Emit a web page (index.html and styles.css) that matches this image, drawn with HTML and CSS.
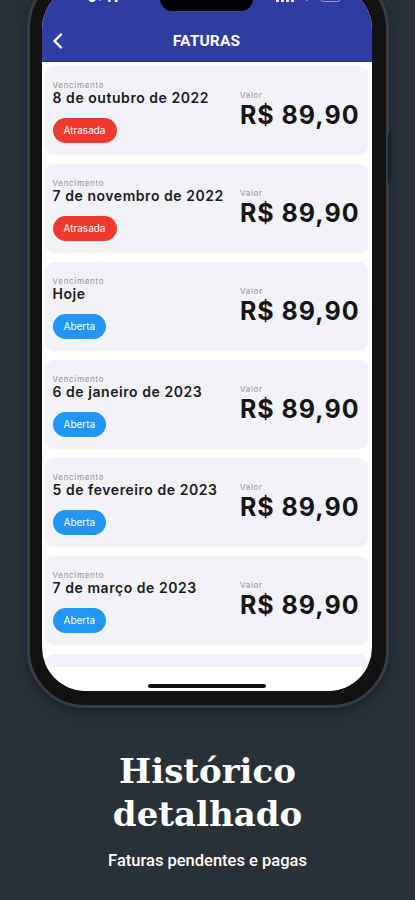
FILE: index.html
```html
<!DOCTYPE html>
<html>
	<head>
		<meta charset="UTF-8">
		<title>Faturas</title>
		<link rel="stylesheet" href="styles.css">
	</head>
	<body>
		<div class="page">
			<div class="phone">
				<span class="side_btn"></span>
				<div class="screen">
					<span class="notch"></span>
					<div class="header">
						<div class="status">
							<span class="time">9:41</span>
							<span class="icons">
								<svg width="18" height="12" viewBox="0 0 18 12"><rect x="0" y="8" width="3" height="4" fill="#fff"/><rect x="5" y="5" width="3" height="7" fill="#fff"/><rect x="10" y="2" width="3" height="10" fill="#fff"/><rect x="15" y="0" width="3" height="12" fill="#fff"/></svg>
								<svg width="14" height="12" viewBox="0 0 14 12"><path d="M7 11 L1 4 Q7 -1 13 4 Z" fill="#fff"/></svg>
								<svg width="24" height="12" viewBox="0 0 24 12"><rect x="0.5" y="0.5" width="20" height="11" rx="3" fill="none" stroke="#fff" stroke-opacity="0.6"/><rect x="2" y="2" width="17" height="8" rx="2" fill="#fff"/><rect x="21.5" y="4" width="2" height="4" rx="1" fill="#fff" fill-opacity="0.6"/></svg>
							</span>
						</div>
						<div class="nav">
							<svg class="back" width="12" height="16" viewBox="0 0 12 16"><polyline points="9,1.5 2.5,8 9,14.5" fill="none" stroke="#fff" stroke-width="2.4" stroke-linecap="round" stroke-linejoin="round"/></svg>
							<span class="nav_title">FATURAS</span>
						</div>
					</div>
					<div class="list">
						<div class="card">
							<div class="card_left">
								<p class="label">Vencimento</p>
								<p class="date">8 de outubro de 2022</p>
								<span class="badge late">Atrasada</span>
							</div>
							<div class="card_right">
								<p class="label">Valor</p>
								<p class="price">R$ 89,90</p>
							</div>
						</div>
						<div class="card">
							<div class="card_left">
								<p class="label">Vencimento</p>
								<p class="date">7 de novembro de 2022</p>
								<span class="badge late">Atrasada</span>
							</div>
							<div class="card_right">
								<p class="label">Valor</p>
								<p class="price">R$ 89,90</p>
							</div>
						</div>
						<div class="card">
							<div class="card_left">
								<p class="label">Vencimento</p>
								<p class="date">Hoje</p>
								<span class="badge open">Aberta</span>
							</div>
							<div class="card_right">
								<p class="label">Valor</p>
								<p class="price">R$ 89,90</p>
							</div>
						</div>
						<div class="card">
							<div class="card_left">
								<p class="label">Vencimento</p>
								<p class="date">6 de janeiro de 2023</p>
								<span class="badge open">Aberta</span>
							</div>
							<div class="card_right">
								<p class="label">Valor</p>
								<p class="price">R$ 89,90</p>
							</div>
						</div>
						<div class="card">
							<div class="card_left">
								<p class="label">Vencimento</p>
								<p class="date">5 de fevereiro de 2023</p>
								<span class="badge open">Aberta</span>
							</div>
							<div class="card_right">
								<p class="label">Valor</p>
								<p class="price">R$ 89,90</p>
							</div>
						</div>
						<div class="card">
							<div class="card_left">
								<p class="label">Vencimento</p>
								<p class="date">7 de março de 2023</p>
								<span class="badge open">Aberta</span>
							</div>
							<div class="card_right">
								<p class="label">Valor</p>
								<p class="price">R$ 89,90</p>
							</div>
						</div>
						<div class="card">
							<div class="card_left">
								<p class="label">Vencimento</p>
							</div>
						</div>
					</div>
					<div class="home">
						<span class="home_bar"></span>
					</div>
				</div>
			</div>
			<h1 class="title">Histórico<br>detalhado</h1>
			<p class="subtitle">Faturas pendentes e pagas</p>
		</div>
	</body>
</html>
```

FILE: styles.css
```css
*{
	padding: 0;
	margin: 0;
	box-sizing: border-box;
}
body{
	background: #293137;
	width: 415px;
	height: 900px;
	overflow: hidden;
	font-family: Inter, "Noto Sans", sans-serif;
}
.page{
	display: flex;
	flex-direction: column;
	align-items: center;
}
.phone{
	position: relative;
	width: 362px;
	height: 738px;
	margin-top: -30px;
	padding: 12px 14px 14px 12px;
	border: 3px solid #3a3d40;
	border-radius: 58px;
	background: #121212;
	box-shadow: 0 4px 10px rgba(0, 0, 0, 0.35);
}
.side_btn{
	position: absolute;
	right: -5px;
	top: 160px;
	width: 3px;
	height: 50px;
	border-radius: 2px;
	background: #1d1f21;
}
.screen{
	position: relative;
	height: 100%;
	display: flex;
	flex-direction: column;
	background: #fff;
	border-radius: 44px;
	overflow: hidden;
}
.notch{
	position: absolute;
	left: 118px;
	top: 0;
	width: 93px;
	height: 26px;
	background: #000;
	border-radius: 0 0 12px 12px;
}
.header{
	height: 77px;
	background: #2f3da1;
	border-bottom: 1px solid #25318a;
	flex-shrink: 0;
}
.status{
	height: 30px;
	display: flex;
	justify-content: space-between;
	align-items: center;
	padding: 0 28px 8px 46px;
}
.time{
	color: #fff;
	font-size: 15px;
	font-weight: 700;
}
.icons{
	display: flex;
	align-items: center;
	gap: 6px;
	opacity: 0.85;
}
.nav{
	position: relative;
	height: 46px;
	display: flex;
	align-items: center;
	justify-content: center;
	padding-top: 5px;
}
.back{
	position: absolute;
	left: 10px;
	top: 18px;
}
.nav_title{
	color: #fff;
	font-family: Roboto, "Liberation Sans", sans-serif;
	font-size: 15.5px;
	font-weight: 700;
	letter-spacing: 0.2px;
}
.list{
	flex: 1;
	display: flex;
	flex-direction: column;
	gap: 10px;
	padding: 4px 4px 0 3px;
	overflow: hidden;
}
.card{
	flex-shrink: 0;
	height: 88px;
	display: flex;
	justify-content: space-between;
	padding: 14px 8px 0 8px;
	background: #f2f3f7;
	border-radius: 9px;
	box-shadow: 0 1px 2px rgba(0, 0, 0, 0.06);
}
.label{
	font-size: 8px;
	line-height: 10px;
	letter-spacing: 0.7px;
	color: #909297;
}
.date{
	font-size: 14px;
	line-height: 16px;
	font-weight: 600;
	letter-spacing: 0.55px;
	color: #1b1b1d;
}
.badge{
	display: inline-block;
	margin-top: 12px;
	height: 25px;
	line-height: 25px;
	padding: 0 11px;
	border-radius: 13px;
	font-size: 10px;
	color: #fff;
}
.late{
	background: #ee3a2f;
}
.open{
	background: #2196f3;
}
.card_right{
	display: flex;
	flex-direction: column;
	justify-content: center;
	padding-bottom: 14px;
}
.price{
	font-size: 25px;
	line-height: 30px;
	font-weight: 700;
	letter-spacing: 1px;
	color: #151517;
}
.home{
	height: 24px;
	flex-shrink: 0;
	display: flex;
	justify-content: center;
	padding-top: 17px;
	background: #fff;
}
.home_bar{
	width: 118px;
	height: 4px;
	border-radius: 3px;
	background: #111;
}
.title{
	margin-top: 42px;
	color: #fff;
	font-family: "DejaVu Serif", "Liberation Serif", serif;
	font-size: 34px;
	line-height: 43px;
	font-weight: 700;
	text-align: center;
}
.subtitle{
	margin-top: 15px;
	color: #fff;
	font-family: Roboto, "Liberation Sans", sans-serif;
	font-size: 16.5px;
	line-height: 20px;
	font-weight: 500;
	text-align: center;
}
```
